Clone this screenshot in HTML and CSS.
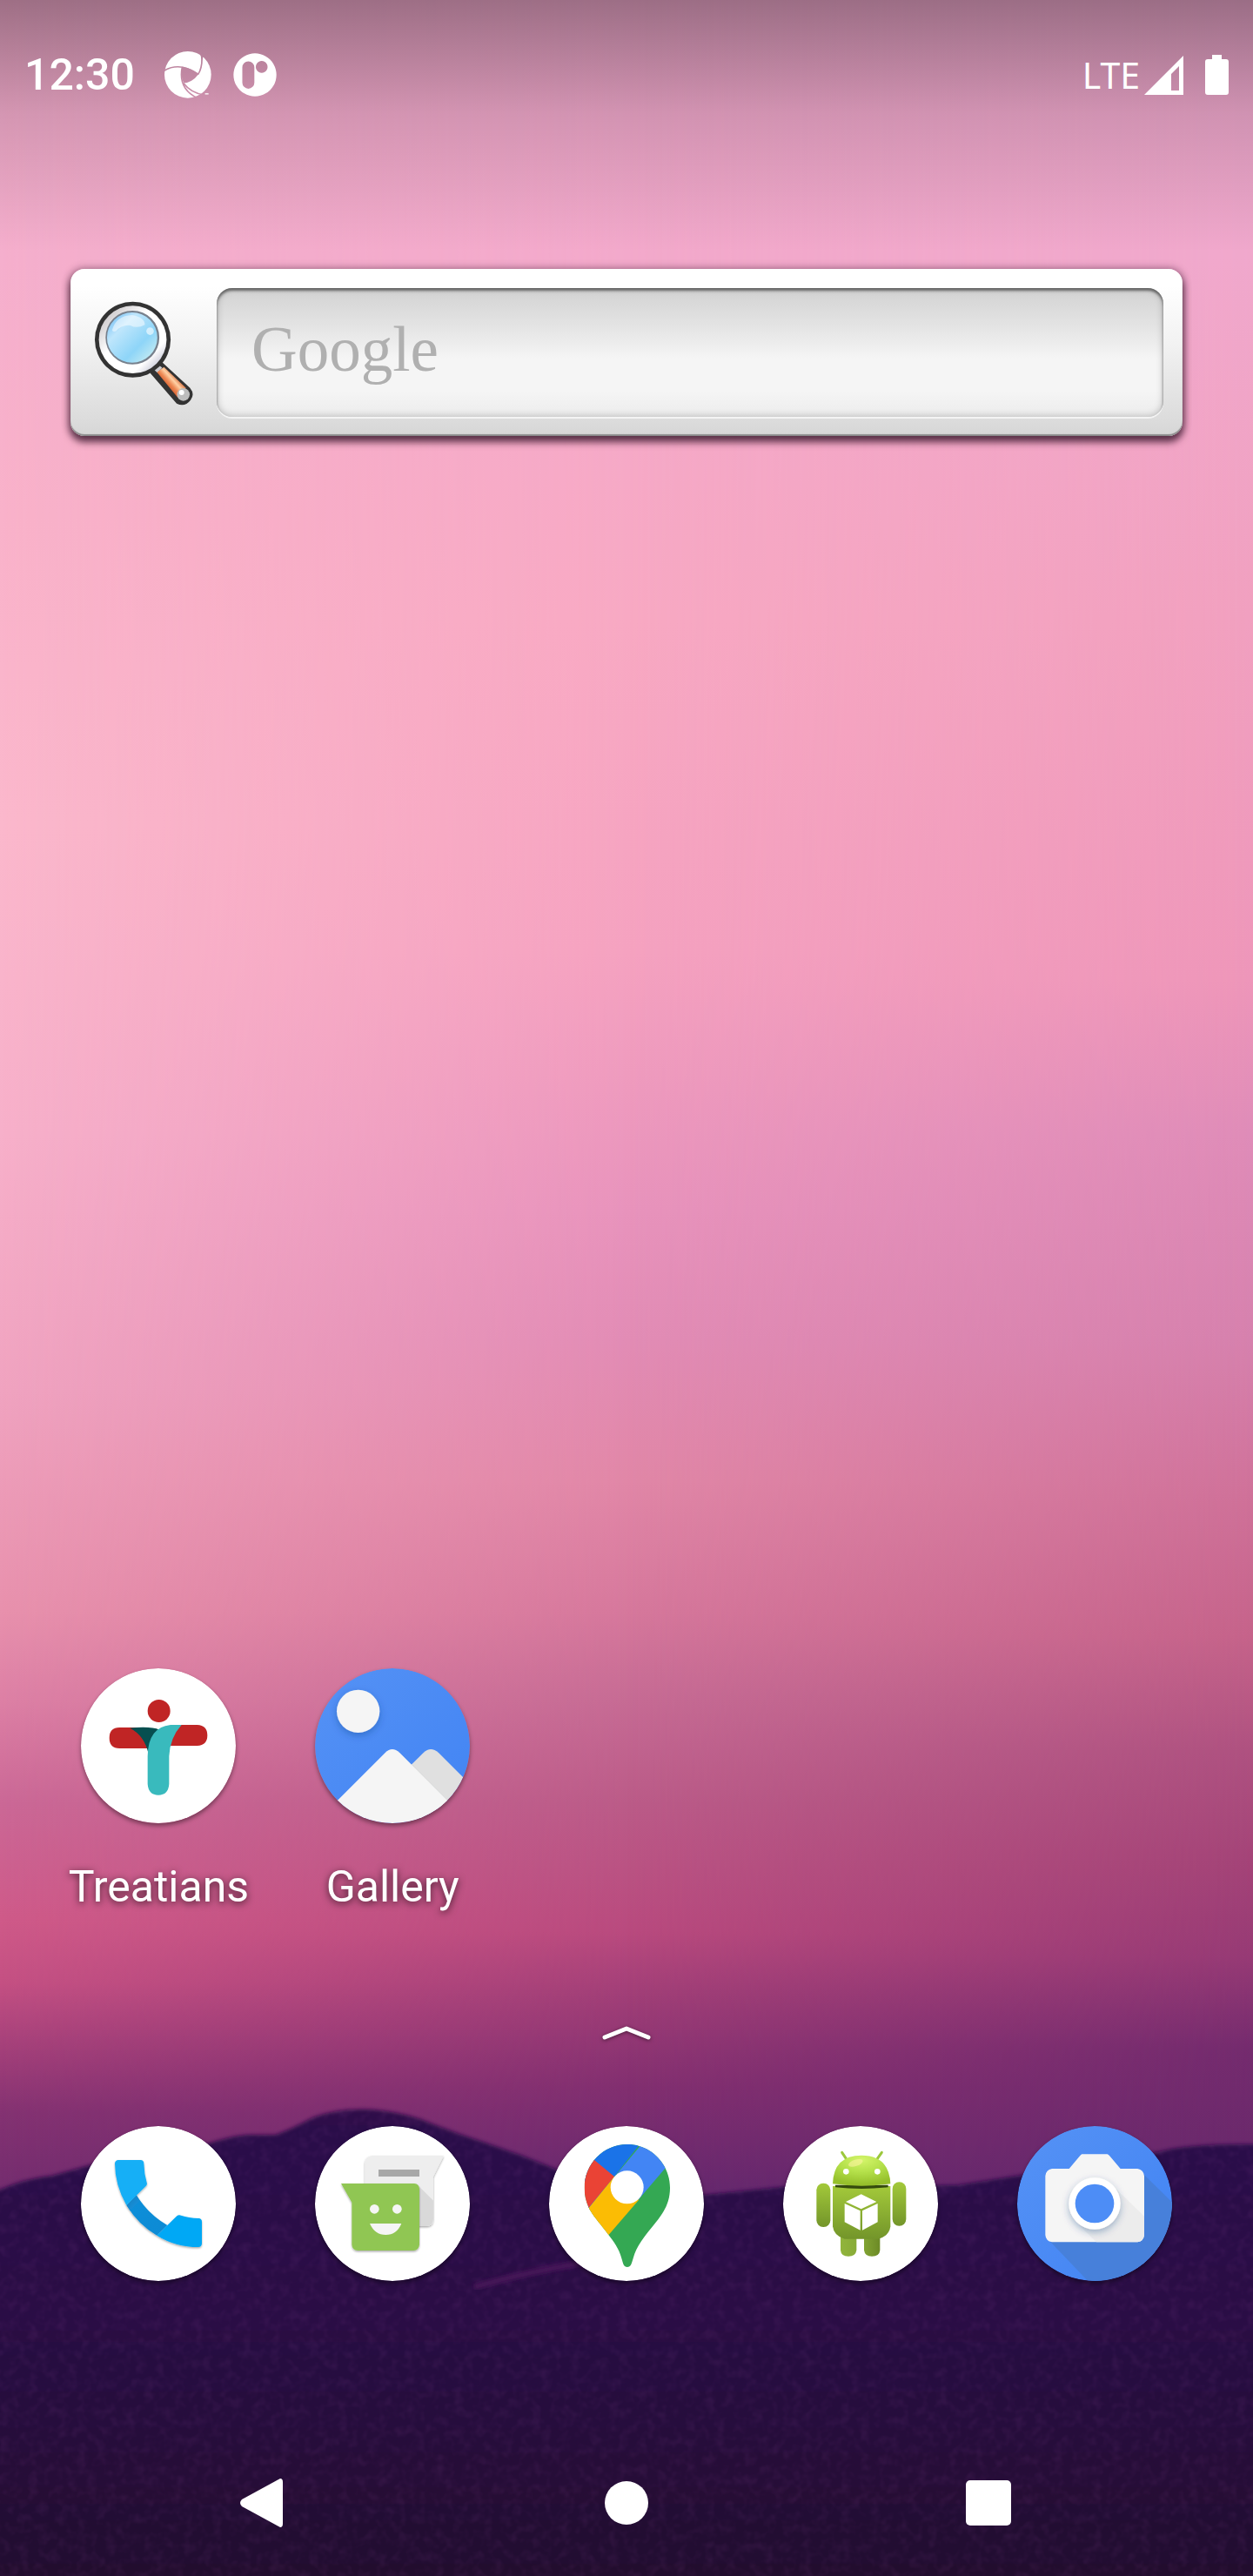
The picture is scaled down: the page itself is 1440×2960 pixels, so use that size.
FILE: index.html
```html
<!DOCTYPE html>
<html lang="en">
<head>
<meta charset="utf-8">
<meta name="viewport" content="width=device-width, initial-scale=1">
<title>Home screen</title>
<link rel="stylesheet" href="styles.css">
</head>
<body>
<svg class="wallpaper" viewBox="0 0 1440 2960" preserveAspectRatio="none" aria-hidden="true">
  <defs>
    <linearGradient id="skyLeft" gradientUnits="userSpaceOnUse" x1="0" y1="0" x2="0" y2="2960">
      <stop offset="0" stop-color="#f3abcd"/><stop offset=".1" stop-color="#f5afcd"/><stop offset=".2" stop-color="#f9b2ca"/><stop offset=".32" stop-color="#fbb8cc"/>
      <stop offset=".44" stop-color="#f7b0ca"/><stop offset=".54" stop-color="#f0a3c0"/><stop offset=".625" stop-color="#e891ad"/><stop offset=".66" stop-color="#dd80a5"/>
      <stop offset=".7" stop-color="#cb6896"/><stop offset=".745" stop-color="#cf5a89"/><stop offset=".77" stop-color="#c45083"/><stop offset=".795" stop-color="#a4407a"/><stop offset=".82" stop-color="#843272"/><stop offset=".85" stop-color="#742d6f"/>
    </linearGradient>
    <linearGradient id="skyMid" gradientUnits="userSpaceOnUse" x1="0" y1="0" x2="0" y2="2960">
      <stop offset="0" stop-color="#f1a9cd"/><stop offset=".1" stop-color="#f3a9cb"/><stop offset=".24" stop-color="#f8a9c3"/><stop offset=".37" stop-color="#f5a2c0"/>
      <stop offset=".47" stop-color="#e893bc"/><stop offset=".52" stop-color="#e28cb5"/><stop offset=".575" stop-color="#e187a7"/><stop offset=".625" stop-color="#d6789c"/><stop offset=".66" stop-color="#c66b94"/>
      <stop offset=".7" stop-color="#bb5b88"/><stop offset=".75" stop-color="#b94a7e"/><stop offset=".775" stop-color="#a03e77"/><stop offset=".81" stop-color="#822f70"/><stop offset=".85" stop-color="#66286e"/>
    </linearGradient>
    <linearGradient id="skyRight" gradientUnits="userSpaceOnUse" x1="0" y1="0" x2="0" y2="2960">
      <stop offset="0" stop-color="#eea8cd"/><stop offset=".1" stop-color="#f0a8cc"/><stop offset=".24" stop-color="#f1a0bf"/><stop offset=".38" stop-color="#ee96b9"/>
      <stop offset=".44" stop-color="#df8cb8"/><stop offset=".52" stop-color="#d681ad"/><stop offset=".58" stop-color="#cf7199"/><stop offset=".635" stop-color="#c5638a"/><stop offset=".68" stop-color="#ae5180"/>
      <stop offset=".725" stop-color="#a34377"/><stop offset=".76" stop-color="#963a75"/><stop offset=".795" stop-color="#742b6e"/><stop offset=".85" stop-color="#66286b"/>
    </linearGradient>
    <linearGradient id="fadeMid"><stop offset="0" stop-color="#000"/><stop offset=".5" stop-color="#fff"/></linearGradient>
    <linearGradient id="fadeRight"><stop offset=".5" stop-color="#fff" stop-opacity="0"/><stop offset="1" stop-color="#fff"/></linearGradient>
    <mask id="maskMid"><rect width="1440" height="2960" fill="url(#fadeMid)"/></mask>
    <mask id="maskRight"><rect width="1440" height="2960" fill="url(#fadeRight)"/></mask>
    <linearGradient id="hill" x1="0" y1="0" x2="0" y2="1"><stop offset="0" stop-color="#2d0d4a"/><stop offset=".45" stop-color="#290c44"/><stop offset=".75" stop-color="#260b38"/><stop offset="1" stop-color="#21062d"/></linearGradient>
    <linearGradient id="scrim" x1="0" y1="0" x2="0" y2="1"><stop offset="0" stop-color="#000" stop-opacity=".35"/><stop offset=".45" stop-color="#000" stop-opacity=".13"/><stop offset="1" stop-color="#000" stop-opacity="0"/></linearGradient>
    <filter id="grain" x="0" y="0" width="100%" height="100%">
      <feTurbulence type="fractalNoise" baseFrequency=".09" numOctaves="2" seed="4"/>
      <feColorMatrix values="0 0 0 0 .3  0 0 0 0 .07  0 0 0 0 .34  1.6 0 0 0 -.68"/>
      <feComposite in2="SourceGraphic" operator="in"/>
    </filter>
    <filter id="soft"><feGaussianBlur stdDeviation="2"/></filter>
    <path id="ridge" d="M-20 2521L0 2516Q30 2503 60 2500L103 2488Q190 2470 240 2463Q270 2453 290 2453L317 2453Q336 2446 360 2433Q390 2422 427 2424Q460 2427 483 2435Q520 2450 560 2463L600 2477L640 2493Q720 2522 810 2522L850 2518L900 2513L1100 2511L1170 2500L1330 2473Q1365 2463 1440 2464H1460V2980H-20Z"/>
  </defs>
  <rect width="1440" height="2960" fill="url(#skyLeft)"/>
  <rect width="1440" height="2960" fill="url(#skyMid)" mask="url(#maskMid)"/>
  <rect width="1440" height="2960" fill="url(#skyRight)" mask="url(#maskRight)"/>
  <use href="#ridge" fill="url(#hill)" filter="url(#soft)"/>
  <use href="#ridge" filter="url(#grain)" opacity=".16"/>
  <path d="M545 2628Q600 2612 670 2600" fill="none" stroke="#461458" stroke-width="7" filter="url(#soft)"/>
  <rect width="1440" height="290" fill="url(#scrim)"/>
</svg>

<div class="screen">
  <header class="status">
    <div class="status-group">
      <time class="clock">12:30</time>
      <svg class="swirl" viewBox="569 89 161 161" aria-hidden="true">
        <mask id="swirlMask"><circle cx="649" cy="169" r="80" fill="#fff"/>
          <path d="M630 142Q660 145 685 168Q665 195 635 198Q622 170 630 142Z" fill="#000"/>
          <path d="M565 157Q620 122 686 168M697 100Q700 145 684 168M684 250Q614 218 630 142M634 198Q660 232 704 238" fill="none" stroke="#000" stroke-width="5"/>
          <path d="M686 88L702 106L697 122Q695 104 686 88ZM672 246Q690 238 716 228L712 250Z" fill="#000"/>
        </mask>
        <rect x="569" y="89" width="161" height="161" fill="#fff" mask="url(#swirlMask)"/>
        <path d="M708 232h12v5h-12z" fill="#fff" opacity=".8"/>
      </svg>
      <svg class="badge" viewBox="806 95 148 148" aria-hidden="true">
        <path fill="#fff" fill-rule="evenodd" d="M880 96a73 73 0 1 0 .1 0ZM857.500 123a20.500 20.500 0 0 1 20.500 20.500v52a20.500 20.500 0 0 1-41 0v-52a20.500 20.500 0 0 1 20.500-20.500ZM903 122a20 20 0 1 1-.1 0Z"/>
      </svg>
    </div>
    <div class="status-group">
      <span class="network">LTE</span>
      <svg class="signal" viewBox="0 0 45 45" aria-hidden="true"><path fill="#fff" fill-rule="evenodd" d="M45 0V45H0ZM40 12L31 21V40H40Z"/></svg>
      <svg class="battery" viewBox="0 0 27 46" aria-hidden="true"><path fill="#fff" d="M8 0H19V5H24Q27 5 27 8V43Q27 46 24 46H3Q0 46 0 43V8Q0 5 3 5H8Z"/></svg>
    </div>
  </header>

  <form class="search">
    <button class="search-button" type="button" aria-label="Search">
      <svg class="lens" viewBox="140 160 350 370" aria-hidden="true">
        <defs>
          <linearGradient id="glass" x1="0" y1="0" x2="1" y2="1"><stop offset="0" stop-color="#5fb4f2"/><stop offset=".3" stop-color="#bfe6fc"/><stop offset=".65" stop-color="#8ed5f8"/><stop offset="1" stop-color="#d8f4f0"/></linearGradient>
          <linearGradient id="rim" x1="0" y1="0" x2="1" y2="1"><stop offset="0" stop-color="#b9b4b8"/><stop offset=".4" stop-color="#fff"/><stop offset=".75" stop-color="#fff"/><stop offset="1" stop-color="#9a9db8"/></linearGradient>
          <linearGradient id="grip" gradientUnits="userSpaceOnUse" x1="386" y1="464" x2="430" y2="424"><stop offset="0" stop-color="#c8481c"/><stop offset=".4" stop-color="#ee8a55"/><stop offset=".65" stop-color="#ffd0a4"/><stop offset="1" stop-color="#d05a2a"/></linearGradient>
        </defs>
        <path d="M372 372L474 466Q492 488 476 508Q456 534 428 520L336 414Z" fill="#333"/>
        <path d="M352 376L378 396L362 414L342 396Z" fill="#c9c9cf"/>
        <path d="M384 394L460 466L432 500L360 412Z" fill="url(#grip)"/>
        <circle cx="451" cy="489" r="22" fill="#bdbdbd"/><circle cx="445" cy="482" r="9" fill="#fff"/>
        <circle cx="276" cy="299" r="131" fill="#333"/>
        <circle cx="276" cy="299" r="117" fill="url(#rim)"/>
        <circle cx="275" cy="292" r="93" fill="#77808c"/>
        <circle cx="274" cy="292" r="87" fill="url(#glass)"/>
        <path d="M205 266Q218 216 274 214Q318 222 318 248Q290 262 268 250Q236 248 218 270Q206 274 205 266Z" fill="#fff" opacity=".5"/>
        <circle cx="336" cy="270" r="13" fill="#fff" opacity=".6"/>
      </svg>
    </button>
    <input class="search-input" type="text" placeholder="Google" aria-label="Search Google">
  </form>

  <main class="apps">
    <a class="app" href="#treatians">
      <svg class="icon" viewBox="99 81 534 534" aria-hidden="true">
        <circle cx="366" cy="348" r="267" fill="#fff"/>
        <circle cx="368" cy="228" r="39" fill="#c02525"/>
        <path d="M232 285H300L340 357H232Q197 357 197 321Q197 285 232 285ZM430 276H500Q535 278 535 312Q535 346 500 348H390Z" fill="#c02525"/>
        <path d="M268 287Q340 280 370 293L350 376H332Q318 312 268 287Z" fill="#064f50"/>
        <path d="M446 276H408Q330 284 329 384V480Q332 518 366 518Q400 518 403 480V384Q406 320 446 276Z" fill="#39babd"/>
      </svg>
      <span class="label">Treatians</span>
    </a>
    <a class="app" href="#gallery">
      <svg class="icon" viewBox="906 81 534 534" aria-hidden="true">
        <defs><clipPath id="galleryClip"><circle cx="1173" cy="348" r="267"/></clipPath>
        <linearGradient id="blue" x1="0" y1="0" x2="1" y2="1"><stop offset="0" stop-color="#5592f5"/><stop offset=".6" stop-color="#4989f4"/><stop offset="1" stop-color="#4285f4"/></linearGradient>
        <filter id="drop" x="-30%" y="-30%" width="160%" height="170%"><feDropShadow dx="0" dy="10" stdDeviation="12" flood-color="#103a80" flood-opacity=".35"/></filter></defs>
        <g clip-path="url(#galleryClip)">
          <rect x="906" y="81" width="534" height="534" fill="url(#blue)"/>
          <circle cx="1055" cy="229" r="74" fill="#f5f5f5" filter="url(#drop)"/>
          <path d="M1100 550L1280 372Q1305 348 1332 372L1540 580V640H1300Z" fill="#e0e0e0"/>
          <path d="M1240 412L1362 535L1380 560H1300Z" fill="#d2d3d3"/>
          <path d="M880 640L1148 372Q1172 348 1198 372L1460 634V640Z" fill="#f5f5f5"/>
        </g>
      </svg>
      <span class="label">Gallery</span>
    </a>
  </main>

  <button class="drawer" type="button" aria-label="All apps">
    <svg class="chevron" viewBox="0 0 60 20" aria-hidden="true"><path d="M5 15L30 5L55 15" fill="none" stroke="#fff" stroke-width="5" stroke-linecap="round" stroke-linejoin="round"/></svg>
  </button>

  <nav class="dock" aria-label="Favourites">
    <a class="app" href="#phone" aria-label="Phone">
      <svg class="icon" viewBox="99 429 534 534" aria-hidden="true">
        <circle cx="366" cy="696" r="267" fill="#fff"/>
        <filter id="lift" x="-20%" y="-20%" width="140%" height="150%"><feDropShadow dx="0" dy="4" stdDeviation="3" flood-color="#000" flood-opacity=".35"/></filter>
        <linearGradient id="phoneMid" x1="0" y1="0" x2="1" y2="1"><stop offset="0" stop-color="#1a7dbb"/><stop offset=".25" stop-color="#118ed8"/><stop offset="1" stop-color="#0a8ad4"/></linearGradient>
        <g filter="url(#lift)">
          <path d="M290 666Q330 732 397 771L361 806Q298 770 256 702Z" fill="url(#phoneMid)"/>
          <path d="M228 546H305Q316 547 316 558Q317 595 327 628L325 634L256 702Q216 632 216 558Q217 547 228 546Z" fill="#19aff6"/>
          <path d="M361 806L430 739Q436 734 444 737Q470 745 505 747Q516 748 516 759V834Q515 846 504 846Q425 846 361 806Z" fill="#06a8f5"/>
        </g>
      </svg>
    </a>
    <a class="app" href="#messages" aria-label="Messages">
      <svg class="icon" viewBox="906 429 534 534" aria-hidden="true">
        <circle cx="1173" cy="696" r="267" fill="#fff"/>
        <g filter="url(#lift)">
          <path d="M1104 531H1350L1314 603V750Q1313 774 1290 774H1078V556Q1080 532 1104 531Z" fill="#eee"/>
        </g>
        <path d="M1266 638L1314 686V750Q1312 774 1290 774H1266Z" fill="#d9d9d9"/>
        <rect x="1125" y="579" width="141" height="24" fill="#a8a8a8"/>
        <path d="M996 627H1248Q1265 629 1266 645V838Q1264 857 1246 858H1054Q1034 857 1033 838V692Z" fill="#90c653" filter="url(#lift)"/>
        <circle cx="1111" cy="715" r="16" fill="#f5f5f5"/><circle cx="1189" cy="715" r="16" fill="#f5f5f5"/>
        <path d="M1095 765H1204Q1188 804 1150 804Q1112 804 1095 765Z" fill="#f5f5f5"/>
      </svg>
    </a>
    <a class="app" href="#maps" aria-label="Maps">
      <svg class="icon" viewBox="93 429 534 534" aria-hidden="true">
        <circle cx="360" cy="696" r="267" fill="#fff"/>
        <clipPath id="pin"><path d="M363 492C445 492 510 560 510 642C510 690 492 722 462 760C420 812 395 842 383 885C377 905 375 915 363 915C350 915 349 905 343 885C334 850 314 825 298 804C270 765 244 740 230 710C220 688 215 668 215 642C215 560 280 492 363 492Z"/></clipPath>
        <g clip-path="url(#pin)">
          <rect x="200" y="480" width="320" height="440" fill="#34a853"/>
          <path d="M200 480H415L318 603L230 720L200 500Z" fill="#1a73e8"/>
          <path d="M200 505L250 547L318 603L215 728H190Z" fill="#ea4335"/>
          <path d="M420 482L320 602L363 640L400 684L540 520V480Z" fill="#4285f4"/>
          <path d="M318 603L230 711L210 760L285 820L402 684L363 640Z" fill="#fbbc04"/>
        </g>
        <circle cx="362" cy="640" r="57" fill="#fff"/>
      </svg>
    </a>
    <a class="app" href="#package" aria-label="Android app">
      <svg class="icon" viewBox="900 429 534 534" aria-hidden="true">
        <defs>
          <radialGradient id="head" cx=".5" cy=".15" r=".8"><stop offset="0" stop-color="#d4f56a"/><stop offset=".5" stop-color="#b4e04a"/><stop offset="1" stop-color="#96c02c"/></radialGradient>
          <linearGradient id="body" x1="0" y1="0" x2="0" y2="1"><stop offset="0" stop-color="#a3c93a"/><stop offset="1" stop-color="#73952a"/></linearGradient>
          <linearGradient id="limb"><stop offset="0" stop-color="#91b43c"/><stop offset=".5" stop-color="#86a936"/><stop offset="1" stop-color="#6c8a26"/></linearGradient>
        </defs>
        <circle cx="1167" cy="696" r="267" fill="#fff"/>
        <path d="M1103 520L1119 544M1240 520L1223 544" stroke="#9cc83c" stroke-width="9" stroke-linecap="round"/>
        <path d="M1098 790H1153V857Q1150 878 1125 878Q1100 878 1098 857ZM1179 790H1234V857Q1232 878 1206 878Q1182 878 1179 857Z" fill="url(#limb)"/>
        <rect x="1015" y="626" width="48" height="151" rx="23" fill="url(#body)"/>
        <rect x="1277" y="622" width="47" height="151" rx="23" fill="url(#body)"/>
        <path d="M1071 636H1270V775Q1266 808 1228 818H1112Q1075 808 1071 775Z" fill="url(#body)"/>
        <path d="M1080 632H1262V640Q1170 650 1080 640Z" fill="#344a0d"/>
        <path d="M1071 628Q1074 530 1170 530Q1266 530 1270 628Q1170 642 1071 628Z" fill="url(#head)"/>
        <ellipse cx="1150" cy="556" rx="26" ry="11" fill="#fbf3a0" opacity=".6" transform="rotate(-18 1150 556)"/>
        <circle cx="1117" cy="586" r="10" fill="#fff"/><circle cx="1225" cy="586" r="10" fill="#fff"/>
        <path d="M1169 664L1222 690L1169 715L1116 690ZM1112 696L1166 721V788L1112 760ZM1226 696L1173 721V788L1226 760Z" fill="#fff"/>
      </svg>
    </a>
    <a class="app" href="#camera" aria-label="Camera">
      <svg class="icon" viewBox="207 129 534 534" aria-hidden="true">
        <clipPath id="cameraClip"><circle cx="474" cy="396" r="267"/></clipPath>
        <g clip-path="url(#cameraClip)">
          <rect x="207" y="129" width="534" height="534" fill="url(#blue)"/>
          <path d="M644 296L780 430V700H486L318 524Z" fill="#4780da"/>
          <path d="M430 226H518Q523 228 527 233L563 276H622Q643 280 645 301V505Q643 526 622 529H327Q306 526 304 505V301Q306 280 327 276H386L422 233Q426 228 430 226Z" fill="#f5f5f5"/>
          <path d="M542 340L645 440V505Q643 526 622 529H480L420 470Z" fill="#ececec"/>
          <circle cx="474" cy="396" r="89" fill="#fff" filter="url(#drop)"/>
          <circle cx="474" cy="396" r="67" fill="#4d8df6"/>
        </g>
      </svg>
    </a>
  </nav>

  <footer class="system-nav">
    <button class="nav-button" type="button" aria-label="Back"><svg class="nav-icon" viewBox="0 0 60 60" aria-hidden="true"><path d="M48 2Q51 2 51 6V54Q51 58 48 58L4 34Q0 30 4 26Z" fill="#fff"/></svg></button>
    <button class="nav-button" type="button" aria-label="Home"><svg class="nav-icon" viewBox="0 0 60 60" aria-hidden="true"><circle cx="30" cy="30" r="25" fill="#fff"/></svg></button>
    <button class="nav-button" type="button" aria-label="Recent apps"><svg class="nav-icon" viewBox="0 0 60 60" aria-hidden="true"><rect x="4" y="4" width="52" height="52" rx="5" fill="#fff"/></svg></button>
  </footer>
</div>
</body>
</html>
```
FILE: styles.css
```css
* { box-sizing: border-box; }

body {
  margin: 0;
  background: #21062d;
  color: #fff;
  font-family: Roboto, "Liberation Sans", sans-serif;
}

button {
  padding: 0;
  border: 0;
  background: none;
}

svg { display: block; }

a { color: inherit; text-decoration: none; }

.wallpaper {
  position: absolute;
  inset: 0;
  z-index: -1;
  width: 100%;
  height: 100%;
}

.screen {
  display: flex;
  flex-direction: column;
  min-height: 100vh;
}

/* Status bar */
.status {
  display: flex;
  justify-content: space-between;
  align-items: center;
  height: 172px;
  padding: 0 28px;
}

.status-group { display: flex; align-items: center; }

.clock {
  margin-right: 34px;
  font-size: 50px;
  font-weight: 500;
  line-height: 60px;
}

.swirl { width: 54px; height: 54px; margin-right: 25px; }
.badge { width: 50px; height: 50px; }

.network {
  margin-right: 5px;
  font-family: "Liberation Sans Narrow", "Noto Sans", sans-serif;
  font-size: 41px;
  line-height: 60px;
}

.signal { width: 45px; height: 45px; margin-right: 25px; }
.battery { width: 27px; height: 46px; }

/* Search widget */
.search {
  display: flex;
  align-items: center;
  height: 192px;
  margin: 137px 81px 0;
  padding: 0 22px 0 26px;
  border-radius: 16px;
  background: linear-gradient(#fff 10%, #f2f2f2 45%, #dcdcdc 90%, #d6d6d6);
  box-shadow: inset 0 -2px 1px #8a8a8a, 0 6px 8px 1px rgba(40, 10, 30, .7), 0 0 8px 2px rgba(60, 20, 45, .3);
}

.search-button { margin-right: 25px; }
.lens { width: 117px; height: 123px; }

.search-input {
  flex: 1;
  min-width: 0;
  height: 148px;
  padding: 0 40px 6px;
  border: 0;
  border-radius: 18px;
  background: linear-gradient(#d2d2d2, #e4e4e4 30%, #f5f5f5 55%, #f5f5f5 80%, #ececec);
  box-shadow: inset 0 3px 3px #666, inset 0 0 8px rgba(0, 0, 0, .25), 0 2px 0 #f4f4f4;
  color: #555;
  font-family: "Liberation Serif", serif;
  font-size: 73px;
}

.search-input::placeholder { color: #b0b0b0; opacity: 1; }

/* App icons */
.apps,
.dock {
  display: grid;
  grid-template-columns: repeat(5, 1fr);
  padding: 0 48px;
}

.apps { margin-top: auto; }

.app {
  display: flex;
  flex-direction: column;
  align-items: center;
}

.icon {
  width: 178px;
  height: 178px;
  border-radius: 50%;
  box-shadow: 0 3px 5px rgba(0, 0, 0, .4);
}

.label {
  margin-top: 43px;
  font-size: 50px;
  line-height: 60px;
  text-shadow: 0 2px 9px rgba(0, 0, 0, .7);
}

.drawer {
  align-self: center;
  margin: 128px 0 97px;
}

.chevron {
  width: 60px;
  height: 20px;
  filter: drop-shadow(0 1px 2px rgba(0, 0, 0, .5));
}

/* System navigation */
.system-nav {
  display: flex;
  justify-content: center;
  gap: 356px;
  height: 168px;
  margin-top: 171px;
}

.nav-button { display: flex; align-items: center; }
.nav-icon { width: 60px; height: 60px; }
```
